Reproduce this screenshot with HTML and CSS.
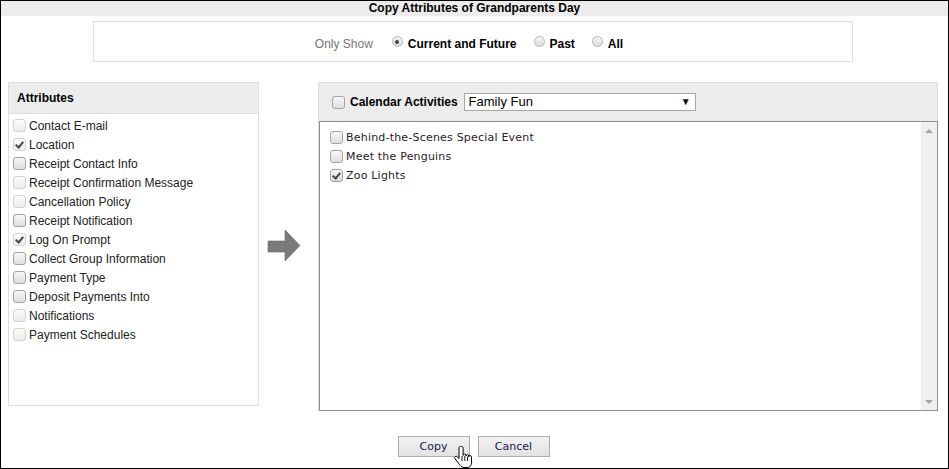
FILE: index.html
```html
<!DOCTYPE html>
<html lang="en">
<head>
    <meta charset="UTF-8">
    <title>Copy Attributes</title>
    <link rel="stylesheet" href="styles.css">
</head>
<body>
    <div class="dialog">
        <div class="title-bar">Copy Attributes of Grandparents Day</div>

        <!-- Filter -->
        <div class="filter">
            <span class="filter-label">Only Show</span>
            <span class="radio on"></span><span class="radio-label">Current and Future</span>
            <span class="radio"></span><span class="radio-label">Past</span>
            <span class="radio"></span><span class="radio-label">All</span>
        </div>

        <div class="main">
            <!-- Attributes -->
            <div class="panel attributes">
                <div class="panel-head">Attributes</div>
                <ul class="attr-list">
                    <li><span class="cb off"></span>Contact E-mail</li>
                    <li><span class="cb checked off"></span>Location</li>
                    <li><span class="cb"></span>Receipt Contact Info</li>
                    <li><span class="cb off"></span>Receipt Confirmation Message</li>
                    <li><span class="cb off"></span>Cancellation Policy</li>
                    <li><span class="cb"></span>Receipt Notification</li>
                    <li><span class="cb checked off"></span>Log On Prompt</li>
                    <li><span class="cb"></span>Collect Group Information</li>
                    <li><span class="cb"></span>Payment Type</li>
                    <li><span class="cb"></span>Deposit Payments Into</li>
                    <li><span class="cb off"></span>Notifications</li>
                    <li><span class="cb off"></span>Payment Schedules</li>
                </ul>
            </div>

            <div class="arrow-col">
                <svg width="34" height="34" viewBox="0 0 34 34">
                    <polygon points="1,12 18,12 18,1 33,16.5 18,32 18,23 1,23" fill="#7a7a7a" stroke="#6a6a6a" stroke-width="0.6"/>
                </svg>
            </div>

            <!-- Calendar activities -->
            <div class="panel activities">
                <div class="act-head">
                    <span class="cb"></span>
                    <span class="act-title">Calendar Activities</span>
                    <div class="select">Family Fun<span class="caret">&#9660;</span></div>
                </div>
                <div class="act-box">
                    <ul class="act-list">
                        <li><span class="cb"></span>Behind-the-Scenes Special Event</li>
                        <li><span class="cb"></span>Meet the Penguins</li>
                        <li><span class="cb checked"></span>Zoo Lights</li>
                    </ul>
                    <div class="scrollbar">
                        <span class="sb-up"></span>
                        <span class="sb-down"></span>
                    </div>
                </div>
            </div>
        </div>

        <div class="buttons">
            <button class="btn">Copy</button>
            <button class="btn">Cancel</button>
            <svg class="cursor" width="20" height="24" viewBox="0 0 20 24">
                <path d="M6.5 1.5c-.9 0-1.5.6-1.5 1.5v10.5l-1.6-1.7c-.7-.7-1.8-.7-2.4 0-.5.6-.5 1.4 0 2l4.3 5.4c.9 1.3 2.3 3.3 4.7 3.3h3.2c2.6 0 4.3-2 4.3-4.6v-6c0-.8-.6-1.4-1.4-1.4-.8 0-1.4.6-1.4 1.4v-.9c0-.8-.6-1.4-1.4-1.4-.8 0-1.4.6-1.4 1.4v-.6c0-.8-.6-1.4-1.4-1.4-.8 0-1.4.6-1.4 1.4V3c0-.9-.6-1.5-1.5-1.5z" fill="#fff" stroke="#000" stroke-width="1"/>
                <path d="M8 11v5M10.8 11v5M13.6 11.5v4.5" stroke="#000" stroke-width="0.9"/>
            </svg>
        </div>
    </div>
</body>
</html>
```

FILE: styles.css
```css
body {
    margin: 0;
    font-family: "Liberation Sans", Arial, sans-serif;
    font-size: 12px;
    color: #222;
}

.dialog {
    width: 949px;
    height: 469px;
    box-sizing: border-box;
    border: 1px solid #000;
    position: relative;
}

.title-bar {
    background-color: #ececec;
    height: 15px;
    line-height: 15px;
    text-align: center;
    font-weight: bold;
    color: #000;
}

.filter {
    margin: 5px 0 0 92px;
    width: 760px;
    height: 41px;
    box-sizing: border-box;
    border: 1px solid #ddd;
    display: flex;
    align-items: center;
    justify-content: center;
    padding-top: 4px;
    padding-right: 8px;
}

.filter-label {
    color: #777;
    margin-right: 19px;
}

.radio {
    width: 11px;
    height: 11px;
    box-sizing: border-box;
    border: 1px solid #b5b5b5;
    border-radius: 50%;
    background: linear-gradient(#f6f6f6, #dcdcdc);
    position: relative;
    top: -2px;
}

.radio.on::after {
    content: "";
    position: absolute;
    left: 2.5px;
    top: 2.5px;
    width: 4px;
    height: 4px;
    border-radius: 50%;
    background-color: #444;
}

.radio-label {
    font-weight: bold;
    color: #000;
    margin: 0 17px 0 5px;
}

.radio-label:last-child {
    margin-right: 0;
}

.main {
    display: flex;
    align-items: flex-start;
    margin-top: 20px;
    padding-left: 7px;
}

.panel {
    box-sizing: border-box;
    border: 1px solid #ddd;
}

.attributes {
    width: 251px;
    height: 324px;
}

.panel-head {
    background-color: #ececec;
    border-bottom: 1px solid #ddd;
    height: 30px;
    line-height: 30px;
    padding-left: 8px;
    font-weight: bold;
    color: #000;
}

.attr-list {
    list-style: none;
    margin: 0;
    padding: 2px 0 0 4px;
}

.attr-list li {
    display: flex;
    align-items: center;
    height: 19px;
    color: #222;
}

.cb {
    width: 13px;
    height: 13px;
    box-sizing: border-box;
    border: 1px solid #a2a2a2;
    border-radius: 3px;
    background: linear-gradient(#f7f7f7, #dedede);
    margin-right: 3px;
    position: relative;
    flex-shrink: 0;
}

.cb.off {
    border-color: #d2d2d2;
    background: linear-gradient(#fbfbfb, #ececec);
}

.cb.checked::after {
    content: "";
    position: absolute;
    left: 3px;
    top: 1px;
    width: 3px;
    height: 6px;
    border: solid #444;
    border-width: 0 2px 2px 0;
    transform: rotate(40deg);
}

.arrow-col {
    width: 59px;
    height: 324px;
    display: flex;
    align-items: center;
    padding-left: 8px;
    box-sizing: border-box;
    padding-top: 4px;
}

.activities {
    width: 620px;
    height: 329px;
    display: flex;
    flex-direction: column;
}

.act-head {
    background-color: #ececec;
    height: 38px;
    display: flex;
    align-items: center;
    padding-left: 13px;
}

.act-head .cb {
    margin-right: 4px;
}

.act-title {
    font-weight: bold;
    color: #000;
    margin: 0 6px 0 1px;
}

.select {
    width: 232px;
    height: 18px;
    box-sizing: border-box;
    border: 1px solid #a6a6a6;
    background-color: #fff;
    font-size: 13px;
    line-height: 16px;
    padding-left: 4px;
    color: #000;
    position: relative;
}

.caret {
    position: absolute;
    right: 4px;
    top: 0;
    font-size: 10px;
    color: #111;
}

.act-box {
    flex: 1;
    border: 1px solid #8e8e8e;
    margin: 0 -1px -1px 0;
    display: flex;
}

.act-list {
    flex: 1;
    list-style: none;
    margin: 0;
    padding: 6px 0 0 10px;
    font-family: "DejaVu Sans", Verdana, sans-serif;
    font-size: 11px;
    letter-spacing: 0.2px;
    color: #2a1a2a;
}

.act-list li {
    display: flex;
    align-items: center;
    height: 19px;
}

.act-list .cb {
    margin-right: 3px;
}

.scrollbar {
    width: 16px;
    background-color: #f0f0f0;
    position: relative;
}

.sb-up, .sb-down {
    position: absolute;
    left: 4px;
    width: 0;
    height: 0;
    border-left: 4px solid transparent;
    border-right: 4px solid transparent;
}

.sb-up {
    top: 7px;
    border-bottom: 4px solid #a3a3a3;
}

.sb-down {
    bottom: 6px;
    border-top: 4px solid #a3a3a3;
}

.buttons {
    display: flex;
    justify-content: center;
    gap: 8px;
    margin-top: 25px;
    position: relative;
    padding-right: 2px;
}

.btn {
    width: 72px;
    height: 21px;
    border: 1px solid #adadad;
    background: linear-gradient(#f2f2f2, #e2e2e2);
    font-family: "DejaVu Sans", Verdana, sans-serif;
    font-size: 11px;
    color: #1a1a4a;
    padding: 0;
    margin: 0;
}

.cursor {
    position: absolute;
    left: 453px;
    top: 9px;
}
```
